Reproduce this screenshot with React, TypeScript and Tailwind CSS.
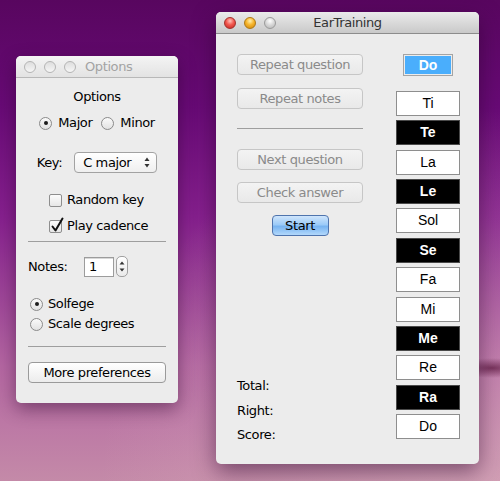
import { ReactNode } from 'react';

const ui = "font-['DejaVu_Sans',sans-serif] text-[13px] tracking-[-0.4px] text-[#000]";

function Light({ kind }: { kind: 'red' | 'yellow' | 'gray' | 'off' }) {
  const cls = {
    red: 'border-[#a3302b] bg-[radial-gradient(circle_at_50%_30%,#ffc2bb_0%,#f2584f_45%,#c0251f_100%)]',
    yellow: 'border-[#ad7814] bg-[radial-gradient(circle_at_50%_30%,#fff0b0_0%,#f6b52c_45%,#cf850c_100%)]',
    gray: 'border-[#9a9a9a] bg-[radial-gradient(circle_at_50%_30%,#ffffff_0%,#d6d6d6_50%,#b4b4b4_100%)]',
    off: 'border-[#b4b4b4] bg-linear-to-b from-[#dedede] to-[#f6f6f6]',
  }[kind];
  return <span className={`h-[12px] w-[12px] rounded-full border ${cls}`} />;
}

function TitleBar({ title, active }: { title: string; active?: boolean }) {
  return (
    <div
      className={`relative flex h-[22px] shrink-0 items-center border-b ${
        active
          ? 'border-[#8c8c8c] bg-linear-to-b from-[#ebebeb] to-[#c9c9c9]'
          : 'border-[#b8b8b8] bg-linear-to-b from-[#f4f4f4] to-[#e3e3e3]'
      }`}
    >
      <div className="absolute left-[8px] top-[5px] flex gap-[8px]">
        <Light kind={active ? 'red' : 'off'} />
        <Light kind={active ? 'yellow' : 'off'} />
        <Light kind={active ? 'gray' : 'off'} />
      </div>
      {active ? (
        <span className="w-full text-center leading-[22px] text-[#333]">{title}</span>
      ) : (
        <span className="pl-[69px] leading-[22px] text-[#a3a3a3]">{title}</span>
      )}
    </div>
  );
}

function Radio({ checked }: { checked?: boolean }) {
  return (
    <span className="flex h-[13px] w-[13px] shrink-0 items-center justify-center rounded-full border border-[#8a8a8a] bg-linear-to-b from-[#fafafa] to-[#e2e2e2]">
      {checked && <span className="h-[4px] w-[4px] rounded-full bg-[#1c1c1c]" />}
    </span>
  );
}

function Checkbox({ checked }: { checked?: boolean }) {
  return (
    <span className="relative h-[13px] w-[13px] shrink-0 rounded-[2px] border border-[#8e8e8e] bg-linear-to-b from-[#fcfcfc] to-[#e6e6e6]">
      {checked && (
        <svg className="absolute left-[0px] top-[-4px]" width="14" height="16" viewBox="0 0 14 16">
          <path d="M2.5 9.5 L5.5 13.5 L12.5 1.5" fill="none" stroke="#111" strokeWidth="2" strokeLinecap="round" strokeLinejoin="round" />
        </svg>
      )}
    </span>
  );
}

function Separator({ className = '' }: { className?: string }) {
  return <div className={`h-px bg-[#9e9e9e] ${className}`} />;
}

function PushButton({ children, disabled, className = '' }: { children: ReactNode; disabled?: boolean; className?: string }) {
  return (
    <div
      className={`flex h-[21px] items-center justify-center rounded-[4px] border ${
        disabled
          ? 'border-[#c6c6c6] bg-linear-to-b from-[#f3f3f3] to-[#e9e9e9] text-[#8a8a8a]'
          : 'border-[#9a9a9a] bg-linear-to-b from-[#ffffff] to-[#ececec] text-[#000]'
      } ${className}`}
    >
      {children}
    </div>
  );
}

function OptionsWindow() {
  return (
    <div className={`absolute left-[16px] top-[56px] flex h-[347px] w-[162px] flex-col overflow-hidden rounded-[5px] bg-[#ececec] shadow-[0_6px_18px_rgba(40,0,40,0.45)] ${ui}`}>
      <TitleBar title="Options" />
      <div className="mt-[11px] h-[16px] text-center leading-[16px]">Options</div>
      <div className="mt-[10px] flex h-[16px] items-center justify-center leading-[16px]">
        <Radio checked />
        <span className="ml-[6px]">Major</span>
        <span className="ml-[9px]" />
        <Radio />
        <span className="ml-[6px]">Minor</span>
      </div>
      <div className="mt-[21px] flex items-center justify-center gap-[12px]">
        <span>Key:</span>
        <div className="flex h-[21px] w-[83px] items-center rounded-[4px] border border-[#a2a2a2] bg-linear-to-b from-[#ffffff] to-[#efefef] pl-[8px] pr-[6px]">
          <span className="flex-1">C major</span>
          <svg width="6" height="11" viewBox="0 0 6 11">
            <path d="M0.5 4 L3 0.5 L5.5 4 Z" fill="#333" />
            <path d="M0.5 7 L3 10.5 L5.5 7 Z" fill="#333" />
          </svg>
        </div>
      </div>
      <div className="mt-[19px] flex h-[16px] items-center gap-[5px] pl-[33px] leading-[16px]">
        <Checkbox />
        <span>Random key</span>
      </div>
      <div className="mt-[10px] flex h-[16px] items-center gap-[5px] pl-[33px] leading-[16px]">
        <Checkbox checked />
        <span>Play cadence</span>
      </div>
      <Separator className="mx-[12px] mt-[7px]" />
      <div className="mt-[14px] flex h-[21px] items-center pl-[12px]">
        <span className="w-[56px]">Notes:</span>
        <div className="flex h-[20px] w-[30px] items-center border border-[#9c9c9c] bg-white pl-[4px] shadow-[inset_0_1px_0_#d8d8d8]">1</div>
        <div className="ml-[2px] flex h-[21px] w-[12px] flex-col items-center justify-center gap-[3px] rounded-[5px] border border-[#a0a0a0] bg-linear-to-b from-[#ffffff] to-[#eaeaea]">
          <svg width="6" height="4" viewBox="0 0 6 4"><path d="M0.5 3.5 L3 0.5 L5.5 3.5 Z" fill="#333" /></svg>
          <svg width="6" height="4" viewBox="0 0 6 4"><path d="M0.5 0.5 L3 3.5 L5.5 0.5 Z" fill="#333" /></svg>
        </div>
      </div>
      <div className="mt-[19px] flex h-[16px] items-center gap-[5px] pl-[14px] leading-[16px]">
        <Radio checked />
        <span>Solfege</span>
      </div>
      <div className="mt-[4px] flex h-[16px] items-center gap-[5px] pl-[14px] leading-[16px]">
        <Radio />
        <span>Scale degrees</span>
      </div>
      <Separator className="mx-[12px] mt-[14px]" />
      <PushButton className="mx-[12px] mt-[15px]">More preferences</PushButton>
    </div>
  );
}

const notes: { name: string; dark?: boolean }[] = [
  { name: 'Ti' },
  { name: 'Te', dark: true },
  { name: 'La' },
  { name: 'Le', dark: true },
  { name: 'Sol' },
  { name: 'Se', dark: true },
  { name: 'Fa' },
  { name: 'Mi' },
  { name: 'Me', dark: true },
  { name: 'Re' },
  { name: 'Ra', dark: true },
  { name: 'Do' },
];

function EarTrainingWindow() {
  return (
    <div className={`absolute left-[216px] top-[12px] flex h-[452px] w-[263px] flex-col overflow-hidden rounded-[5px] bg-[#ececec] shadow-[0_8px_22px_rgba(40,0,40,0.5)] ${ui}`}>
      <TitleBar title="EarTraining" active />
      <div className="flex">
        <div className="ml-[21px] flex w-[126px] flex-col">
          <PushButton disabled className="mt-[20px]">Repeat question</PushButton>
          <PushButton disabled className="mt-[13px]">Repeat notes</PushButton>
          <Separator className="mt-[19px]" />
          <PushButton disabled className="mt-[20px]">Next question</PushButton>
          <PushButton disabled className="mt-[12px]">Check answer</PushButton>
          <div className="mt-[12px] flex h-[21px] w-[57px] items-center justify-center self-center rounded-[4px] border border-[#4f74ad] bg-[linear-gradient(180deg,#cfe5fc_0%,#9ccbf8_45%,#78b4f1_55%,#b2d8fb_100%)] text-[#000]">
            Start
          </div>
          <div className="mt-[138px] flex flex-col">
            <span className="h-[24.5px] leading-[24.5px]">Total:</span>
            <span className="h-[24.5px] leading-[24.5px]">Right:</span>
            <span className="h-[24.5px] leading-[24.5px]">Score:</span>
          </div>
        </div>
        <div className="ml-[33px] flex w-[64px] flex-col items-center font-['Liberation_Sans',Arial,sans-serif] text-[14px] tracking-normal">
          <div className="mt-[20px] h-[22px] w-[50px] border border-[#a4a4a4] p-px">
            <div className="flex h-full w-full items-center justify-center bg-[#4aaefc] font-bold text-white">Do</div>
          </div>
          <div className="mt-[15px] flex flex-col gap-[4.36px]">
            {notes.map((n, i) => (
              <div
                key={i}
                className={`flex h-[25px] w-[64px] items-center justify-center border ${
                  n.dark ? 'border-[#4a4a4a] bg-black font-bold text-white' : 'border-[#8e8e8e] bg-white text-black'
                }`}
              >
                {n.name}
              </div>
            ))}
          </div>
        </div>
      </div>
    </div>
  );
}

export default function App() {
  return (
    <div className="relative h-[481px] w-[500px] overflow-hidden bg-[linear-gradient(180deg,#58065f_0%,#680a76_22%,#86208e_45%,#9e4698_62%,#b466a2_76%,#c48aa8_100%)]">
      <div className="absolute inset-0 bg-[radial-gradient(ellipse_at_90%_100%,rgba(230,190,200,0.45)_0%,rgba(230,190,200,0)_55%)]" />
      <div className="absolute inset-0 bg-[radial-gradient(ellipse_40px_10px_at_492px_368px,rgba(90,20,60,0.7)_0%,rgba(90,20,60,0)_100%)]" />
      <OptionsWindow />
      <EarTrainingWindow />
    </div>
  );
}
